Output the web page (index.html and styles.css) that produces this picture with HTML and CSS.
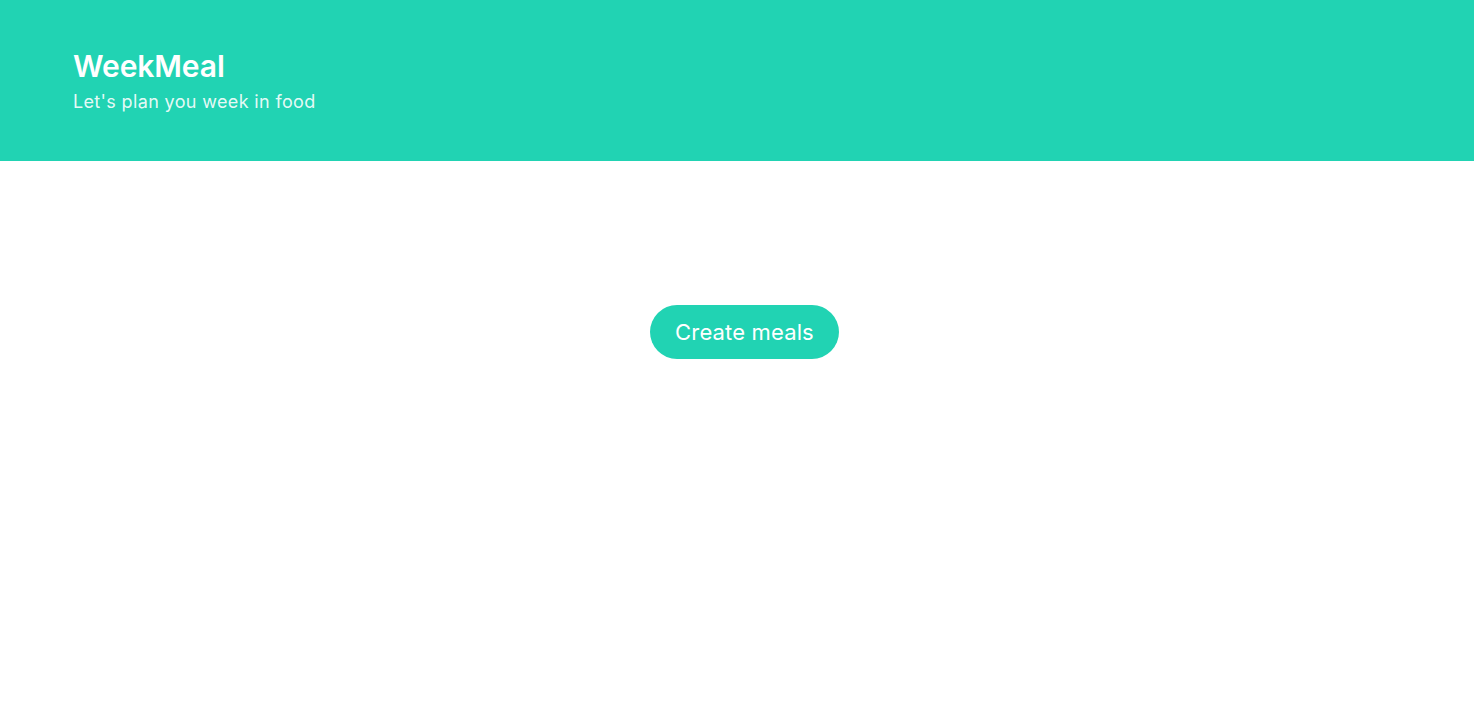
FILE: index.html
```html
<!DOCTYPE html>
<html lang="en">
<head>
<meta charset="utf-8">
<title>WeekMeal</title>
<link rel="stylesheet" href="styles.css">
</head>
<body>
<header class="hero">
  <h1 class="hero-title">WeekMeal</h1>
  <p class="hero-subtitle">Let's plan you week in food</p>
</header>
<main class="content">
  <button class="btn-primary" type="button">Create meals</button>
</main>
</body>
</html>
```
FILE: styles.css
```css
* { box-sizing: border-box; }
html, body { margin: 0; padding: 0; background: #fff; }
body { font-family: Inter, "Noto Sans", sans-serif; }
.hero {
  background: #21d3b3;
  height: 161px;
  padding: 47px 73px 0;
  color: #fff;
}
.hero-title {
  margin: 0;
  font-size: 30px;
  font-weight: 600;
  line-height: 38px;
  letter-spacing: -0.1px;
}
.hero-subtitle {
  margin: 5px 0 0;
  font-size: 18px;
  line-height: 24px;
  letter-spacing: 0.35px;
  color: rgba(255,255,255,0.9);
}
.content {
  display: flex;
  justify-content: center;
  padding: 144px 0 0 15px;
}
.btn-primary {
  font-family: inherit;
  background: #21d3b3;
  color: #fff;
  border: 0;
  border-radius: 27px;
  height: 54px;
  padding: 0 25px;
  font-size: 22px;
  font-weight: 400;
  letter-spacing: 0.15px;
  cursor: pointer;
}
```
